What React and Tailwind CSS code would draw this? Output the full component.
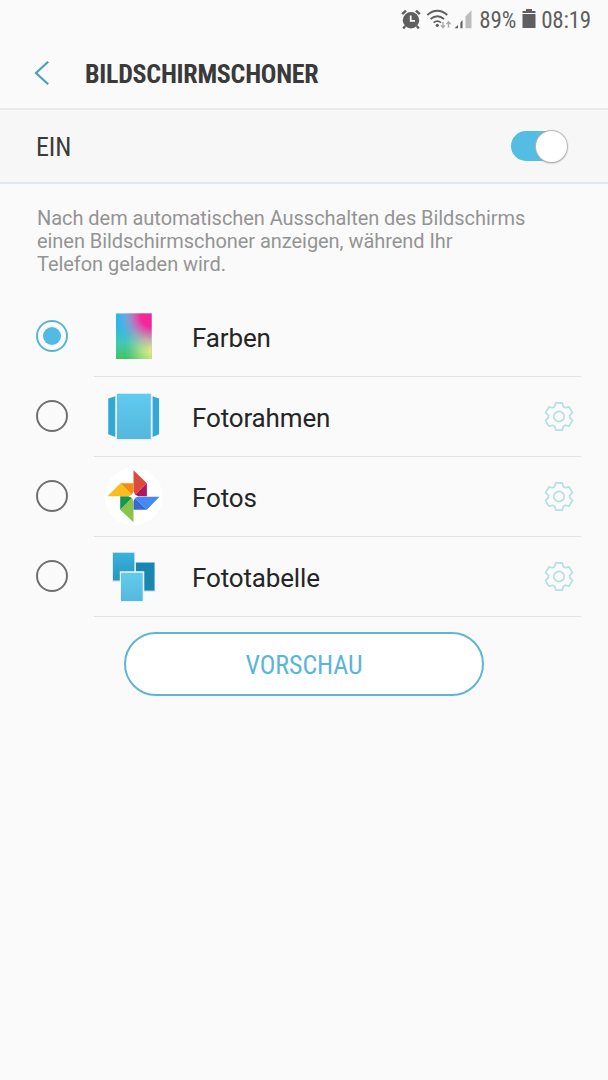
const condensed = "font-['Roboto_Condensed','Roboto',sans-serif] [font-stretch:75%]";

const StatusIcons = () => (
  <svg width="76" height="24" viewBox="0 0 76 24" className="shrink-0">
    {/* Alarm */}
    <g fill="#5f5f5f">
      <circle cx="11" cy="12.2" r="8.2" />
      <path d="M2.2 6.2L6 2.6M19.8 6.2L16 2.6M5.2 18L3.2 20.4M16.8 18L18.8 20.4" stroke="#5f5f5f" strokeWidth="2.4" />
    </g>
    <path d="M10.7 7.5V12.8H15" fill="none" stroke="#fafafa" strokeWidth="1.8" />
    {/* Wifi */}
    <g fill="none" stroke="#5f5f5f" strokeWidth="1.8">
      <path d="M27.3 7Q37.3 -1.4 47.3 7" />
      <path d="M30.5 11Q37.3 5.4 44.1 11" />
      <path d="M33.6 14.6Q37.3 11.8 41 14.6" />
    </g>
    <circle cx="37.3" cy="17.3" r="1.6" fill="#5f5f5f" />
    <g fill="none" stroke="#aaa" strokeWidth="1.4">
      <path d="M43 14V19.4M41 17.2L43 19.6L45 17.2" />
      <path d="M48.5 19.5V14M46.5 16L48.5 13.7L50.5 16" />
    </g>
    {/* Signal */}
    <path d="M54.5 20.3L58 17V20.3ZM60.4 20.3V14.5L62.5 12V20.3Z" fill="#5f5f5f" />
    <path d="M65.5 20.3V8.2L71.5 2.3V20.3Z" fill="#bdbdbd" />
  </svg>
);

const GearIcon = () => (
  <svg width="32" height="32" viewBox="-16 -16.5 32 32" fill="none" stroke="#b5e0e8" strokeWidth="1.7" strokeLinejoin="round">
    <path d="M-4.3 -9.9L-3.3 -13.7H3.3L4.3 -9.9L6.4 -8.7L10 -9.7L13.4 -3.9L10.7 -1.2V1.2L13.4 3.9L10 9.7L6.4 8.7L4.3 9.9L3.3 13.7H-3.3L-4.3 9.9L-6.4 8.7L-10 9.7L-13.4 3.9L-10.7 1.2V-1.2L-13.4 -3.9L-10 -9.7L-6.4 -8.7Z" />
    <circle r="5.2" />
  </svg>
);

const ColorsIcon = () => (
  <svg width="60" height="60" viewBox="0 0 60 60">
    <defs>
      <linearGradient id="colorBase" x1="0" y1="0" x2="0" y2="1">
        <stop offset="0.25" stopColor="#29b6ee" />
        <stop offset="0.65" stopColor="#45c7b4" />
        <stop offset="1" stopColor="#3fc463" />
      </linearGradient>
      <radialGradient id="colorPink" gradientUnits="userSpaceOnUse" cx="48" cy="10" r="36">
        <stop offset="0.3" stopColor="#f5259a" />
        <stop offset="0.5" stopColor="#e25cae" stopOpacity="0.85" />
        <stop offset="0.7" stopColor="#c98cbc" stopOpacity="0.5" />
        <stop offset="1" stopColor="#90b0d8" stopOpacity="0" />
      </radialGradient>
      <radialGradient id="colorYellow" gradientUnits="userSpaceOnUse" cx="51" cy="43" r="30">
        <stop offset="0.1" stopColor="#f6ec7c" />
        <stop offset="0.5" stopColor="#d5e884" stopOpacity="0.65" />
        <stop offset="1" stopColor="#a0dc90" stopOpacity="0" />
      </radialGradient>
    </defs>
    <path d="M12 7.5H47.6V53H12Z" fill="url(#colorBase)" />
    <path d="M12 7.5H47.6V53H12Z" fill="url(#colorYellow)" />
    <path d="M12 7.5H47.6V53H12Z" fill="url(#colorPink)" />
  </svg>
);

const FrameIcon = () => (
  <svg width="60" height="60" viewBox="0 0 60 60">
    <defs>
      <linearGradient id="frame" x1="0" y1="0" x2="0" y2="1">
        <stop offset="0" stopColor="#60caf0" />
        <stop offset="1" stopColor="#55b7dd" />
      </linearGradient>
    </defs>
    <path d="M4.2 12.5L11.3 10.2V51L4.2 48.2ZM48.5 10.2L55.1 12.5V48.2L48.5 51Z" fill="#34a8d5" />
    <path d="M11.8 7.5H48.2V54.2H11.8Z" fill="#e4f0f4" />
    <path d="M13 7.7H46.8V53H13Z" fill="url(#frame)" />
  </svg>
);

const PhotosIcon = () => (
  <svg width="60" height="60" viewBox="0.5 -0.3 60 60">
    <circle cx="30" cy="30" r="29" fill="#fff" />
    <path d="M30 4L43.4 17L30 30Z" fill="#dc4a3d" />
    <path d="M43.4 17V30H30Z" fill="#b0185b" />
    <path d="M56 30.5L43.4 43.5L30 30.5Z" fill="#4688f4" />
    <path d="M43.4 43.5H30V30.5Z" fill="#3868d8" />
    <path d="M30 56L16.7 43.5L30 30Z" fill="#8bc34a" />
    <path d="M16.7 43.5V30H30Z" fill="#14974f" />
    <path d="M4 30L17 17L30 30Z" fill="#fbbc1d" />
    <path d="M17 17H30V30Z" fill="#f58b12" />
    <path d="M30 25L31.6 28.4L35 30L31.6 31.6L30 35L28.4 31.6L25 30L28.4 28.4Z" fill="#fff" />
  </svg>
);

const TableIcon = () => (
  <svg width="60" height="60" viewBox="0 0 60 60">
    <defs>
      <linearGradient id="tableLeft" x1="0" y1="0" x2="0" y2="1">
        <stop offset="0" stopColor="#3bb3dd" />
        <stop offset="1" stopColor="#2695c1" />
      </linearGradient>
      <linearGradient id="tableFront" x1="0" y1="0" x2="0" y2="1">
        <stop offset="0" stopColor="#63cbed" />
        <stop offset="1" stopColor="#56b8dd" />
      </linearGradient>
    </defs>
    <path d="M8.2 6.2H31V36H8.2ZM31 16H51.2V46H31Z" fill="#d9e8ed" />
    <path d="M9 6.8H30.3V34.5H9Z" fill="url(#tableLeft)" />
    <path d="M32 16.6H50.5V44.6H32Z" fill="#1b87b1" />
    <path d="M15.8 25.2H40.3V56.4H15.8Z" fill="#e9f4f8" />
    <path d="M17 26.8H38.7V55H17Z" fill="url(#tableFront)" />
  </svg>
);

const options = [
  { name: 'Farben', Icon: ColorsIcon, selected: true },
  { name: 'Fotorahmen', Icon: FrameIcon, settings: true },
  { name: 'Fotos', Icon: PhotosIcon, settings: true },
  { name: 'Fototabelle', Icon: TableIcon, settings: true },
];

const Radio = ({ selected }) => (
  <span
    role="radio"
    aria-checked={!!selected}
    className={`mb-0.5 flex h-8 w-8 shrink-0 items-center justify-center rounded-full border-2 ${selected ? 'border-[#5ab6d3]' : 'border-[#707070]'}`}
  >
    {selected && <span className="h-[18px] w-[18px] rounded-full bg-[#51bbe3]" />}
  </span>
);

const App = () => {
  return (
    <div className="h-[1080px] w-[608px] overflow-hidden bg-[#fafafa] font-['Roboto',sans-serif] text-[#252525]">
      {/* Status bar */}
      <div className={`flex h-10 items-center justify-end pr-[17px] text-[23px] text-[#5f5f5f] ${condensed}`}>
        <StatusIcons />
        <span className="ml-[3px] pt-0.5 tracking-[-0.1px]">89%</span>
        <svg width="14" height="20" viewBox="0 0 14 20" className="mr-[5px] mb-0.5 ml-1.5 shrink-0" fill="#5f5f5f">
          <path d="M4 0H10V2H13.5V4H0.5V2H4ZM0.5 5H13.5V19H0.5Z" />
        </svg>
        <span className="pt-0.5 tracking-[-0.2px]">08:19</span>
      </div>

      {/* Header */}
      <header className="flex h-[70px] items-center border-b-2 border-[#ebebeb] pl-[34px]">
        <svg width="17" height="26" viewBox="0 0 17 26" fill="none" stroke="#4e9fb9" strokeWidth="2.2" className="mb-0.5">
          <path d="M14.2 1.7L2 13L14.2 24.3" />
        </svg>
        <h1 className={`ml-[34px] text-[26px] font-bold tracking-[-0.28px] text-[#3a3a3a] ${condensed}`}>BILDSCHIRMSCHONER</h1>
      </header>

      {/* Master switch */}
      <div className="flex h-[74px] items-center justify-between border-b-2 border-[#e0e8ee] bg-[#f7f7f7] pr-[41px] pl-9">
        <span className={`pt-0.5 text-[26px] tracking-[-0.1px] text-[#3a3a3a] ${condensed}`}>EIN</span>
        <div className="flex h-[30px] w-14 items-center justify-end rounded-full bg-[#53bde3]">
          <span className="h-[31px] w-[31px] shrink-0 rounded-full bg-white shadow-[0_0_1px_1px_#b5b5b5,0_1px_2px_#999]" />
        </div>
      </div>

      <p className="mt-[23px] pl-[37px] text-[20px] leading-[23px] tracking-[-0.05px] text-[#949494]">
        Nach dem automatischen Ausschalten des Bildschirms<br />
        einen Bildschirmschoner anzeigen, während Ihr<br />
        Telefon geladen wird.
      </p>

      <div role="radiogroup" className="mt-[21px] pr-[27px] pl-9">
        {options.map(({ name, Icon, selected, settings }) => (
          <div key={name} className="flex h-20 items-center">
            <Radio selected={selected} />
            <div className="ml-[26px] flex h-20 flex-1 items-center border-b border-[#e4e4e4] pr-1.5 pb-px pl-[10px]">
              <Icon />
              <span className="ml-7 flex-1 pt-1 text-[26px] tracking-[-0.15px]">{name}</span>
              {settings && <GearIcon />}
            </div>
          </div>
        ))}
      </div>

      <button className={`mx-auto mt-[15px] block h-16 w-[360px] rounded-full border-2 border-[#5db7d3] bg-white pt-[3px] text-[26px] tracking-[-0.1px] text-[#5ab6d8] ${condensed}`}>
        VORSCHAU
      </button>
    </div>
  );
};

export default App;
